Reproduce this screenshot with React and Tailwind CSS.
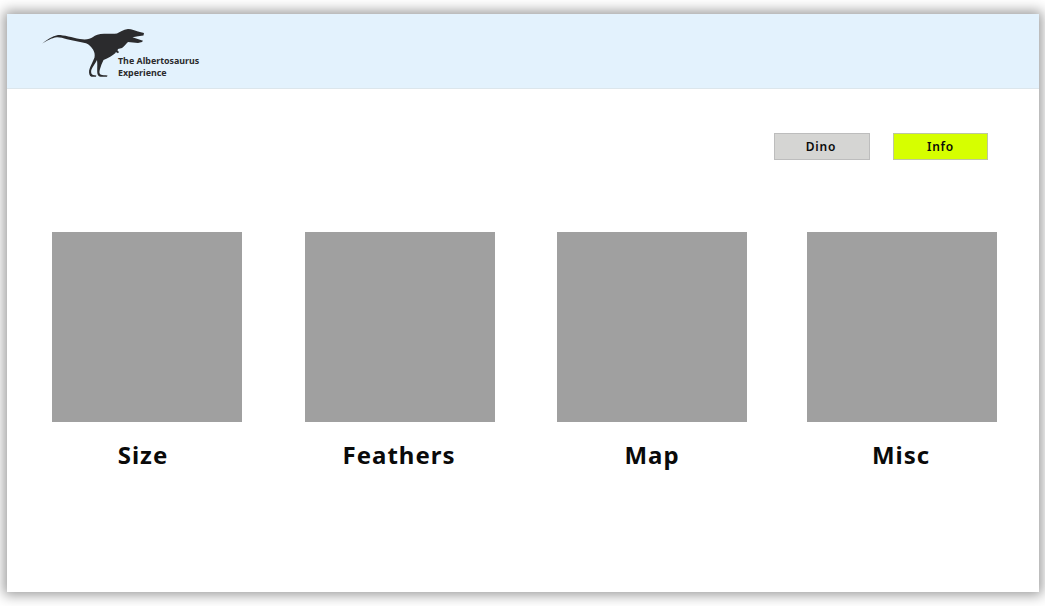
const font = { fontFamily: '"Noto Sans", "Open Sans", sans-serif' };

function Dino() {
  return (
    <svg width="110" height="50" viewBox="40 28 110 50" className="block shrink-0">
      <path
        fill="#2b2b2d"
        d="M42.2 43.5 C47 39.5 52 36 58 35 C64 35 72 37.5 80 39 C85 39.8 90 39.5 93 37 C95 35 99 34 104 33.8 C109 33.5 113 34 117 33.5 C120 32 123 29.5 128 29 C132 29 135 30.5 138 31.5 L144 33 L143.5 35.5 L138 36.3 L132.5 37.2 L143 40.8 L142 42 L138 43 L128 42 C126 44 124 46.5 122 48 L118 49 L117.5 50.5 L119 52 L118 53.3 L115.8 52 L115.5 53 C113 55.5 108 58 103.5 60 C102 63 100.8 66 100 69 C99.3 71.5 99 73.5 100.5 74.5 C102.5 75.2 105 75.3 107.5 75.5 L107 76.7 L100.5 76.8 C98 76.3 97.2 74.5 97.2 71.5 C97.2 67.5 97.5 63.5 97 60 C95.5 63.5 92.5 66.5 91.3 70 C90.8 72.5 91.3 74.5 93 75 L96.3 75.5 L96 76.7 L91.5 76.8 C89.5 76.3 88.8 73.5 89.1 70.5 C89.8 66.5 93 62 94.5 57.5 C95 54.5 94.5 52 93 49.5 C91 46.5 89 44.5 86 43.3 C80 42 73 40.8 67 39.3 C63 38 60 37.2 57 37.3 C51 38 47 41 42.2 43.5 Z"
      />
    </svg>
  );
}

function Tile({ label, className, labelClass }) {
  return (
    <div className={`flex flex-col items-center w-[190px] ${className}`}>
      <div className="w-[190px] h-[190px] bg-[#a0a0a0]" />
      <div className={`mt-[17px] text-[24px] leading-[32px] font-bold tracking-[1px] text-[#0a0a0a] ${labelClass}`} style={font}>
        {label}
      </div>
    </div>
  );
}

export default function App() {
  return (
    <div className="w-[1045px] h-[606px] bg-white pt-[14px] pl-[7px] pr-[6px] pb-[14px] overflow-hidden">
      <div className="w-full h-full bg-white shadow-[0_0_12px_3px_rgba(0,0,0,0.4)] flex flex-col">
        <header className="h-[75px] shrink-0 bg-[#e3f2fd] border-b border-[#dce6ec] flex items-start pt-[14px] pl-[33px]">
          <Dino />
          <div
            className="-ml-[32px] mt-[27px] text-[8.9px] leading-[11.5px] font-bold text-[#2b2b2d]"
            style={font}
          >
            <div>The Albertosaurus</div>
            <div>Experience</div>
          </div>
        </header>
        <div className="flex justify-end gap-[23px] mt-[44px] pr-[51px]">
          <button className="w-[96px] h-[27px] pr-[2px] bg-[#d5d5d3] border border-[#bdbdbd] text-[12px] font-semibold tracking-[0.8px] text-[#0a0a0a]" style={font}>
            Dino
          </button>
          <button className="w-[95px] h-[27px] bg-[#d6ff00] border border-[#bdc7a0] text-[12px] font-semibold tracking-[0.8px] text-[#0a0a0a]" style={font}>
            Info
          </button>
        </div>
        <div className="flex mt-[72px] pl-[45px]">
          <Tile label="Size" labelClass="mr-[8px]" />
          <Tile label="Feathers" className="ml-[63px]" labelClass="mr-[2px]" />
          <Tile label="Map" className="ml-[62px]" />
          <Tile label="Misc" className="ml-[60px]" labelClass="mr-[2px]" />
        </div>
      </div>
    </div>
  );
}
